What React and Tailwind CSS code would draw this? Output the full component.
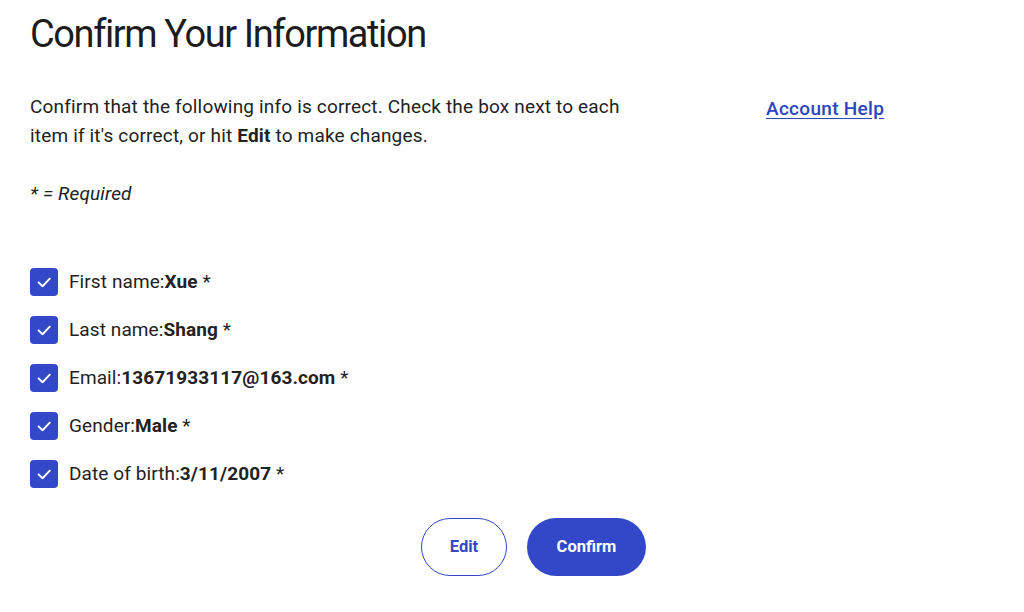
import React from "react";

function Check() {
  return (
    <div className="flex h-[28px] w-[28px] shrink-0 items-center justify-center rounded-[4px] bg-[#3248c8]">
      <svg width="28" height="28" viewBox="0 0 28 28" fill="none">
        <path d="M8.6 14.4 L12.5 18.2 L19.8 10.6" stroke="white" strokeWidth="2" strokeLinecap="round" strokeLinejoin="round" />
      </svg>
    </div>
  );
}

const rows = [
  ["First name:", "Xue"],
  ["Last name:", "Shang"],
  ["Email:", "13671933117@163.com"],
  ["Gender:", "Male"],
  ["Date of birth:", "3/11/2007"],
];

export default function App() {
  return (
    <div className="min-h-[612px] bg-white font-['Roboto',sans-serif] text-[#222]">
      <div className="pl-[30px] pt-[12px]">
        <h1 className="text-[38px] leading-[44px] tracking-[-1.4px] text-[#1c1c1c]">Confirm Your Information</h1>
        <div className="mt-[36px] flex">
          <p className="w-[612px] text-[19px] leading-[29px] tracking-[0.17px]">
            Confirm that the following info is correct. Check the box next to each item if it's correct, or hit{" "}
            <span className="font-bold">Edit</span> to make changes.
          </p>
          <a href="#" className="ml-[124px] mt-[2px] self-start text-[19px] font-medium leading-[29px] tracking-[0.3px] text-[#2e44bd] underline underline-offset-[3px]">
            Account Help
          </a>
        </div>
        <p className="mt-[29px] text-[19px] italic leading-[29px] tracking-[0.15px]">* = Required</p>
        <div className="mt-[60px] flex flex-col gap-[20px]">
          {rows.map(([k, v]) => (
            <div key={k} className="flex h-[28px] items-center gap-[11px]">
              <Check />
              <span className="text-[19px] tracking-[0.1px]">
                {k}
                <span className="font-bold">{v}</span> *
              </span>
            </div>
          ))}
        </div>
      </div>
      <div className="mt-[30px] flex justify-center gap-[20px] pl-[43px]">
        <button className="h-[58px] w-[86px] rounded-full border border-[#3248c8] bg-white text-[16.5px] font-bold text-[#3248c8]">
          Edit
        </button>
        <button className="h-[58px] w-[119px] rounded-full bg-[#3248c8] text-[16.5px] font-bold text-white">
          Confirm
        </button>
      </div>
    </div>
  );
}
